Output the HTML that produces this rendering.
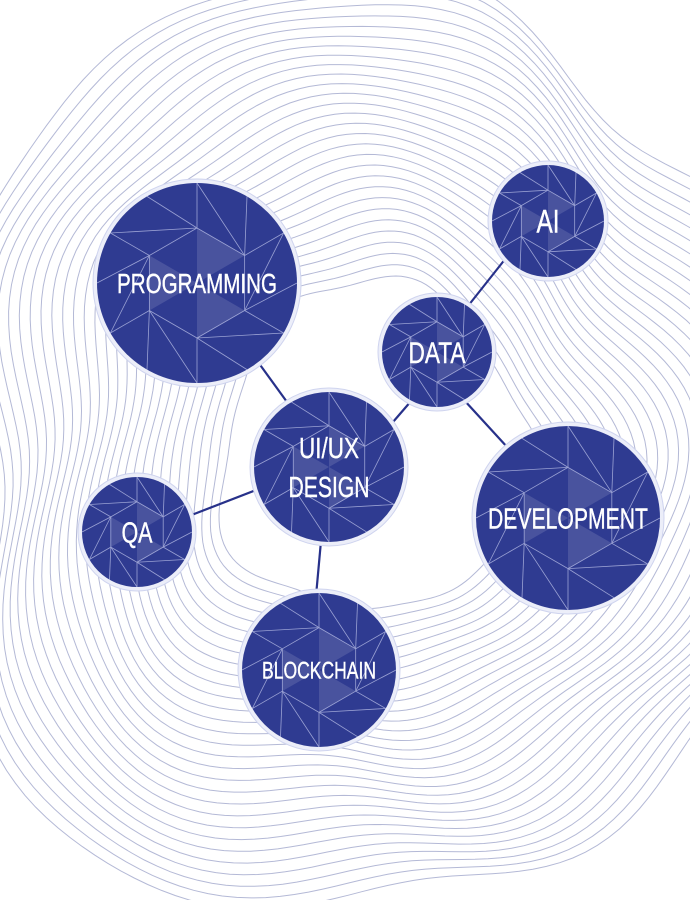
<!DOCTYPE html><html><head><meta charset="utf-8"><style>
html,body{margin:0;padding:0;background:#fff;width:690px;height:900px;overflow:hidden}
svg{display:block;overflow:hidden}
text{font-family:"Liberation Sans",sans-serif;fill:#fff;text-anchor:middle;stroke:#fff;stroke-width:0.4}
</style></head><body>
<svg id="s" width="690" height="900" viewBox="0 0 690 900">
<g id="lines" fill="none" stroke="#b4b9d6" stroke-width="1"></g>
<g stroke="#27318a" stroke-width="2.2">
<line x1="258" y1="362" x2="287" y2="402"/>
<line x1="393" y1="422" x2="412" y2="400"/>
<line x1="468" y1="306" x2="506" y2="258"/>
<line x1="464" y1="400" x2="508" y2="448"/>
<line x1="256" y1="490" x2="189" y2="516"/>
<line x1="321" y1="541" x2="316" y2="596"/>
</g>
<g id="circ"></g>
</svg>
<script>
var NS="http://www.w3.org/2000/svg";
var L=document.getElementById("lines");
for(var k=0;k<30;k++){
 var R=160+k*10, cx=375, cy=450, d="";
 for(var i=0;i<=200;i++){
  var a=i/200*Math.PI*2;
  var r=R*(1+0.07*Math.sin(3*a+0.5+k*0.03)+0.04*Math.sin(5*a+1+k*0.05)+0.02*Math.sin(8*a+k*0.2));
  var x=cx+r*Math.cos(a)*0.98, y=cy+r*Math.sin(a)*1.03;
  d+=(i?"L":"M")+x.toFixed(1)+" "+y.toFixed(1);
 }
 var p=document.createElementNS(NS,"path");p.setAttribute("d",d+"Z");L.appendChild(p);
}
var C=document.getElementById("circ");
var cs=[[197,283,100,["PROGRAMMING"],28,[160]],[548,221,56,["AI"],32,[23]],[437,352,55,["DATA"],30,[57]],[329,467,75,["UI/UX","DESIGN"],29,[60,81]],[137,532,55,["QA"],29,[31]],[568,518,92,["DEVELOPMENT"],29,[160]],[319,670,77,["BLOCKCHAIN"],24,[114]]];
cs.forEach(function(c){
 var x=c[0],y=c[1],r=c[2],h="";
 h+='<circle cx="'+x+'" cy="'+y+'" r="'+(r+4)+'" fill="#eceef9" stroke="#cfd4ef" stroke-width="1"/>';
 h+='<circle cx="'+x+'" cy="'+y+'" r="'+r+'" fill="#2f3b91"/>';
 var P=[[x,y]];
 for(var i=0;i<6;i++){var a=i*Math.PI/3+Math.PI/6;P.push([x+0.55*r*Math.cos(a),y+0.55*r*Math.sin(a)]);}
 for(var i=0;i<12;i++){var a=i*Math.PI/6;P.push([x+r*Math.cos(a),y+r*Math.sin(a)]);}
 var e=[];
 for(var i=1;i<=6;i++){e.push([i,i%6+1]);}
 for(var i=0;i<6;i++){var v=i+1;e.push([v,7+((2*i)%12)]);e.push([v,7+((2*i+1)%12)]);e.push([v,7+((2*i+11)%12)]);}
 h+='<g opacity="0.12" fill="#fff">';
 for(var i=0;i<6;i+=2){var a=P[i+1],b=P[(i+1)%6+1];h+='<polygon points="'+x+','+y+' '+a+' '+b+'"/>';}
 h+='</g><g stroke="#c8cdf0" stroke-width="0.8" opacity="0.7">';
 e.forEach(function(q){var a=P[q[0]],b=P[q[1]];h+='<line x1="'+a[0]+'" y1="'+a[1]+'" x2="'+b[0]+'" y2="'+b[1]+'"/>';});
 h+='</g>';
 var lines=c[3],fs=c[4];
 lines.forEach(function(t,j){var yy=y+(j-(lines.length-1)/2)*fs*1.35+fs*0.36;
  h+='<text x="'+x+'" y="'+yy+'" font-size="'+fs+'" textLength="'+c[5][j]+'" lengthAdjust="spacingAndGlyphs">'+t+'</text>';});
 var g=document.createElementNS(NS,"g");g.innerHTML=h;C.appendChild(g);
});
</script>
</body></html>
